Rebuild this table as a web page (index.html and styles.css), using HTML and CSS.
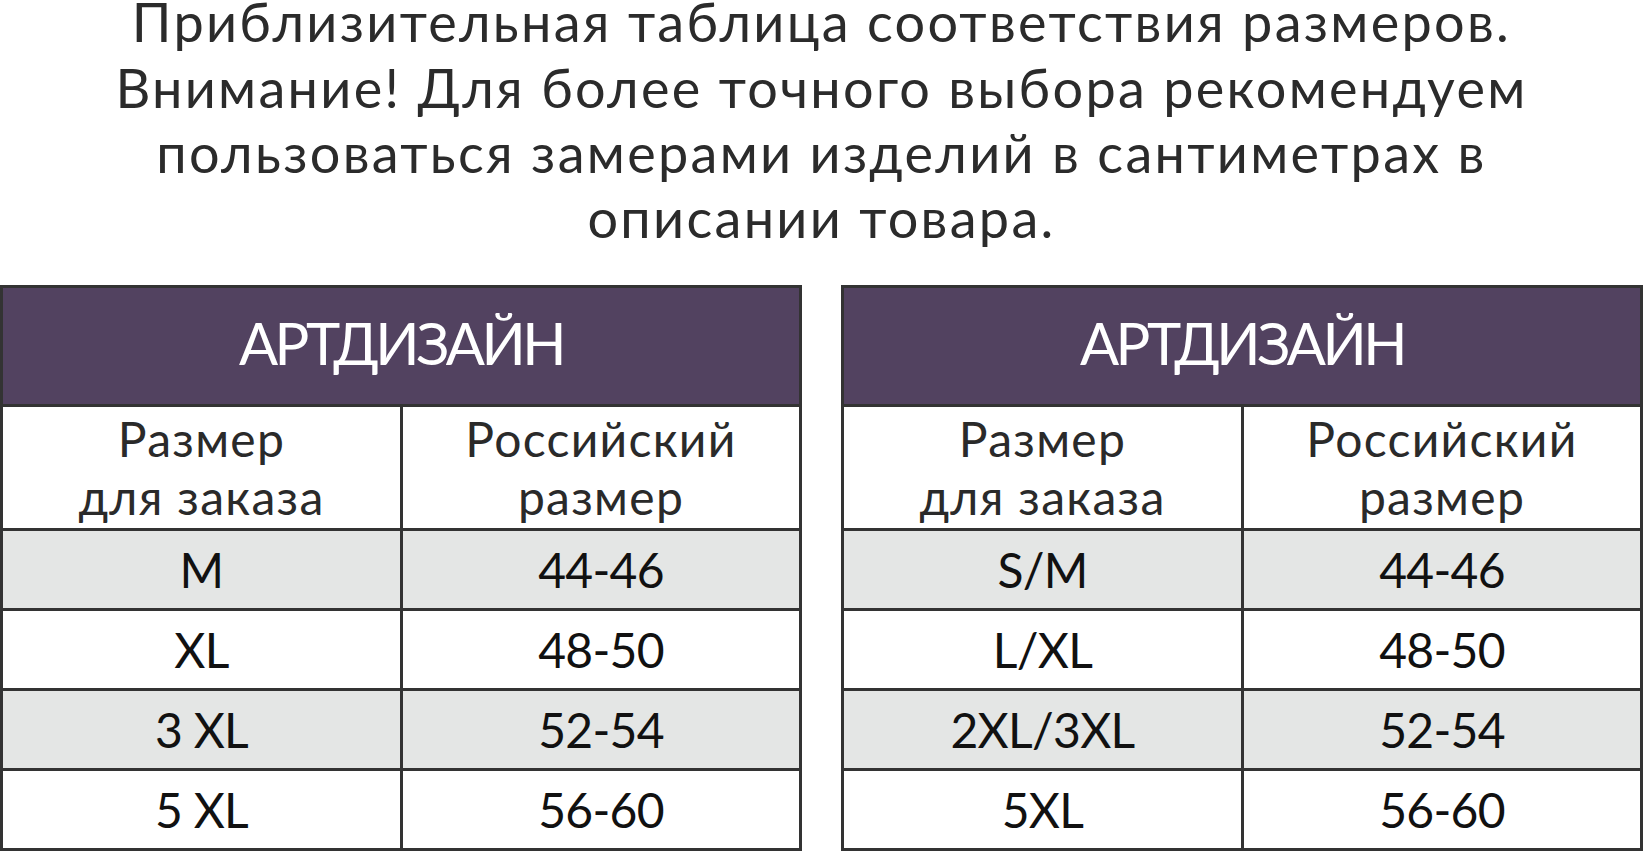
FILE: index.html
```html
<!DOCTYPE html>
<html lang="ru">
<head>
<meta charset="utf-8">
<title>Таблица размеров</title>
<link rel="stylesheet" href="styles.css">
</head>
<body>
<div class="page">
  <div class="title">
    <span class="line first">Приблизительная таблица соответствия размеров.</span>
    <span class="line">Внимание! Для более точного выбора рекомендуем</span>
    <span class="line">пользоваться замерами изделий в сантиметрах в</span>
    <span class="line">описании товара.</span>
  </div>
  <div class="tables">
    <div class="size-table">
      <div class="head">АРТДИЗАЙН</div>
      <div class="sub cell-left">Размер<br>для заказа</div>
      <div class="sub">Российский<br>размер</div>
      <div class="cell cell-left shade">M</div>
      <div class="cell shade">44-46</div>
      <div class="cell cell-left">XL</div>
      <div class="cell">48-50</div>
      <div class="cell cell-left shade">3 XL</div>
      <div class="cell shade">52-54</div>
      <div class="cell cell-left last">5 XL</div>
      <div class="cell last">56-60</div>
    </div>
    <div class="size-table">
      <div class="head">АРТДИЗАЙН</div>
      <div class="sub cell-left">Размер<br>для заказа</div>
      <div class="sub">Российский<br>размер</div>
      <div class="cell cell-left shade">S/M</div>
      <div class="cell shade">44-46</div>
      <div class="cell cell-left">L/XL</div>
      <div class="cell">48-50</div>
      <div class="cell cell-left shade">2XL/3XL</div>
      <div class="cell shade">52-54</div>
      <div class="cell cell-left last">5XL</div>
      <div class="cell last">56-60</div>
    </div>
  </div>
</div>
</body>
</html>
```
FILE: styles.css
```css
html, body {
  margin: 0;
  padding: 0;
  background: #ffffff;
}
body {
  font-family: Lato, "Open Sans", sans-serif;
}
.page {
  width: 1643px;
}
.title {
  height: 285px;
  text-align: center;
  font-size: 54px;
  line-height: 65px;
  color: #2b2b2b;
  letter-spacing: 2.3px;
}
.line {
  display: block;
}
.line.first {
  line-height: 44px;
  margin-bottom: 10.5px;
}
.tables {
  display: flex;
  justify-content: space-between;
}
.size-table {
  width: 802px;
  box-sizing: border-box;
  border: 3px solid #333333;
  display: grid;
  grid-template-columns: 400px 1fr;
}
.head {
  grid-column: span 2;
  box-sizing: border-box;
  height: 119px;
  padding-bottom: 8px;
  border-bottom: 3px solid #333333;
  background: #524260;
  color: #ffffff;
  font-size: 58px;
  display: flex;
  align-items: center;
  justify-content: center;
  letter-spacing: -3.5px;
}
.sub {
  height: 121px;
  border-bottom: 3px solid #333333;
  display: flex;
  align-items: center;
  justify-content: center;
  text-align: center;
  font-size: 48px;
  line-height: 58px;
  color: #2a2a2a;
  letter-spacing: 1.3px;
}
.cell {
  height: 77px;
  border-bottom: 3px solid #333333;
  display: flex;
  align-items: center;
  justify-content: center;
  font-size: 48px;
  color: #111111;
  letter-spacing: -0.7px;
}
.cell.last {
  border-bottom: none;
}
.cell-left {
  border-right: 3px solid #333333;
}
.shade {
  background: #e4e6e5;
}
```
